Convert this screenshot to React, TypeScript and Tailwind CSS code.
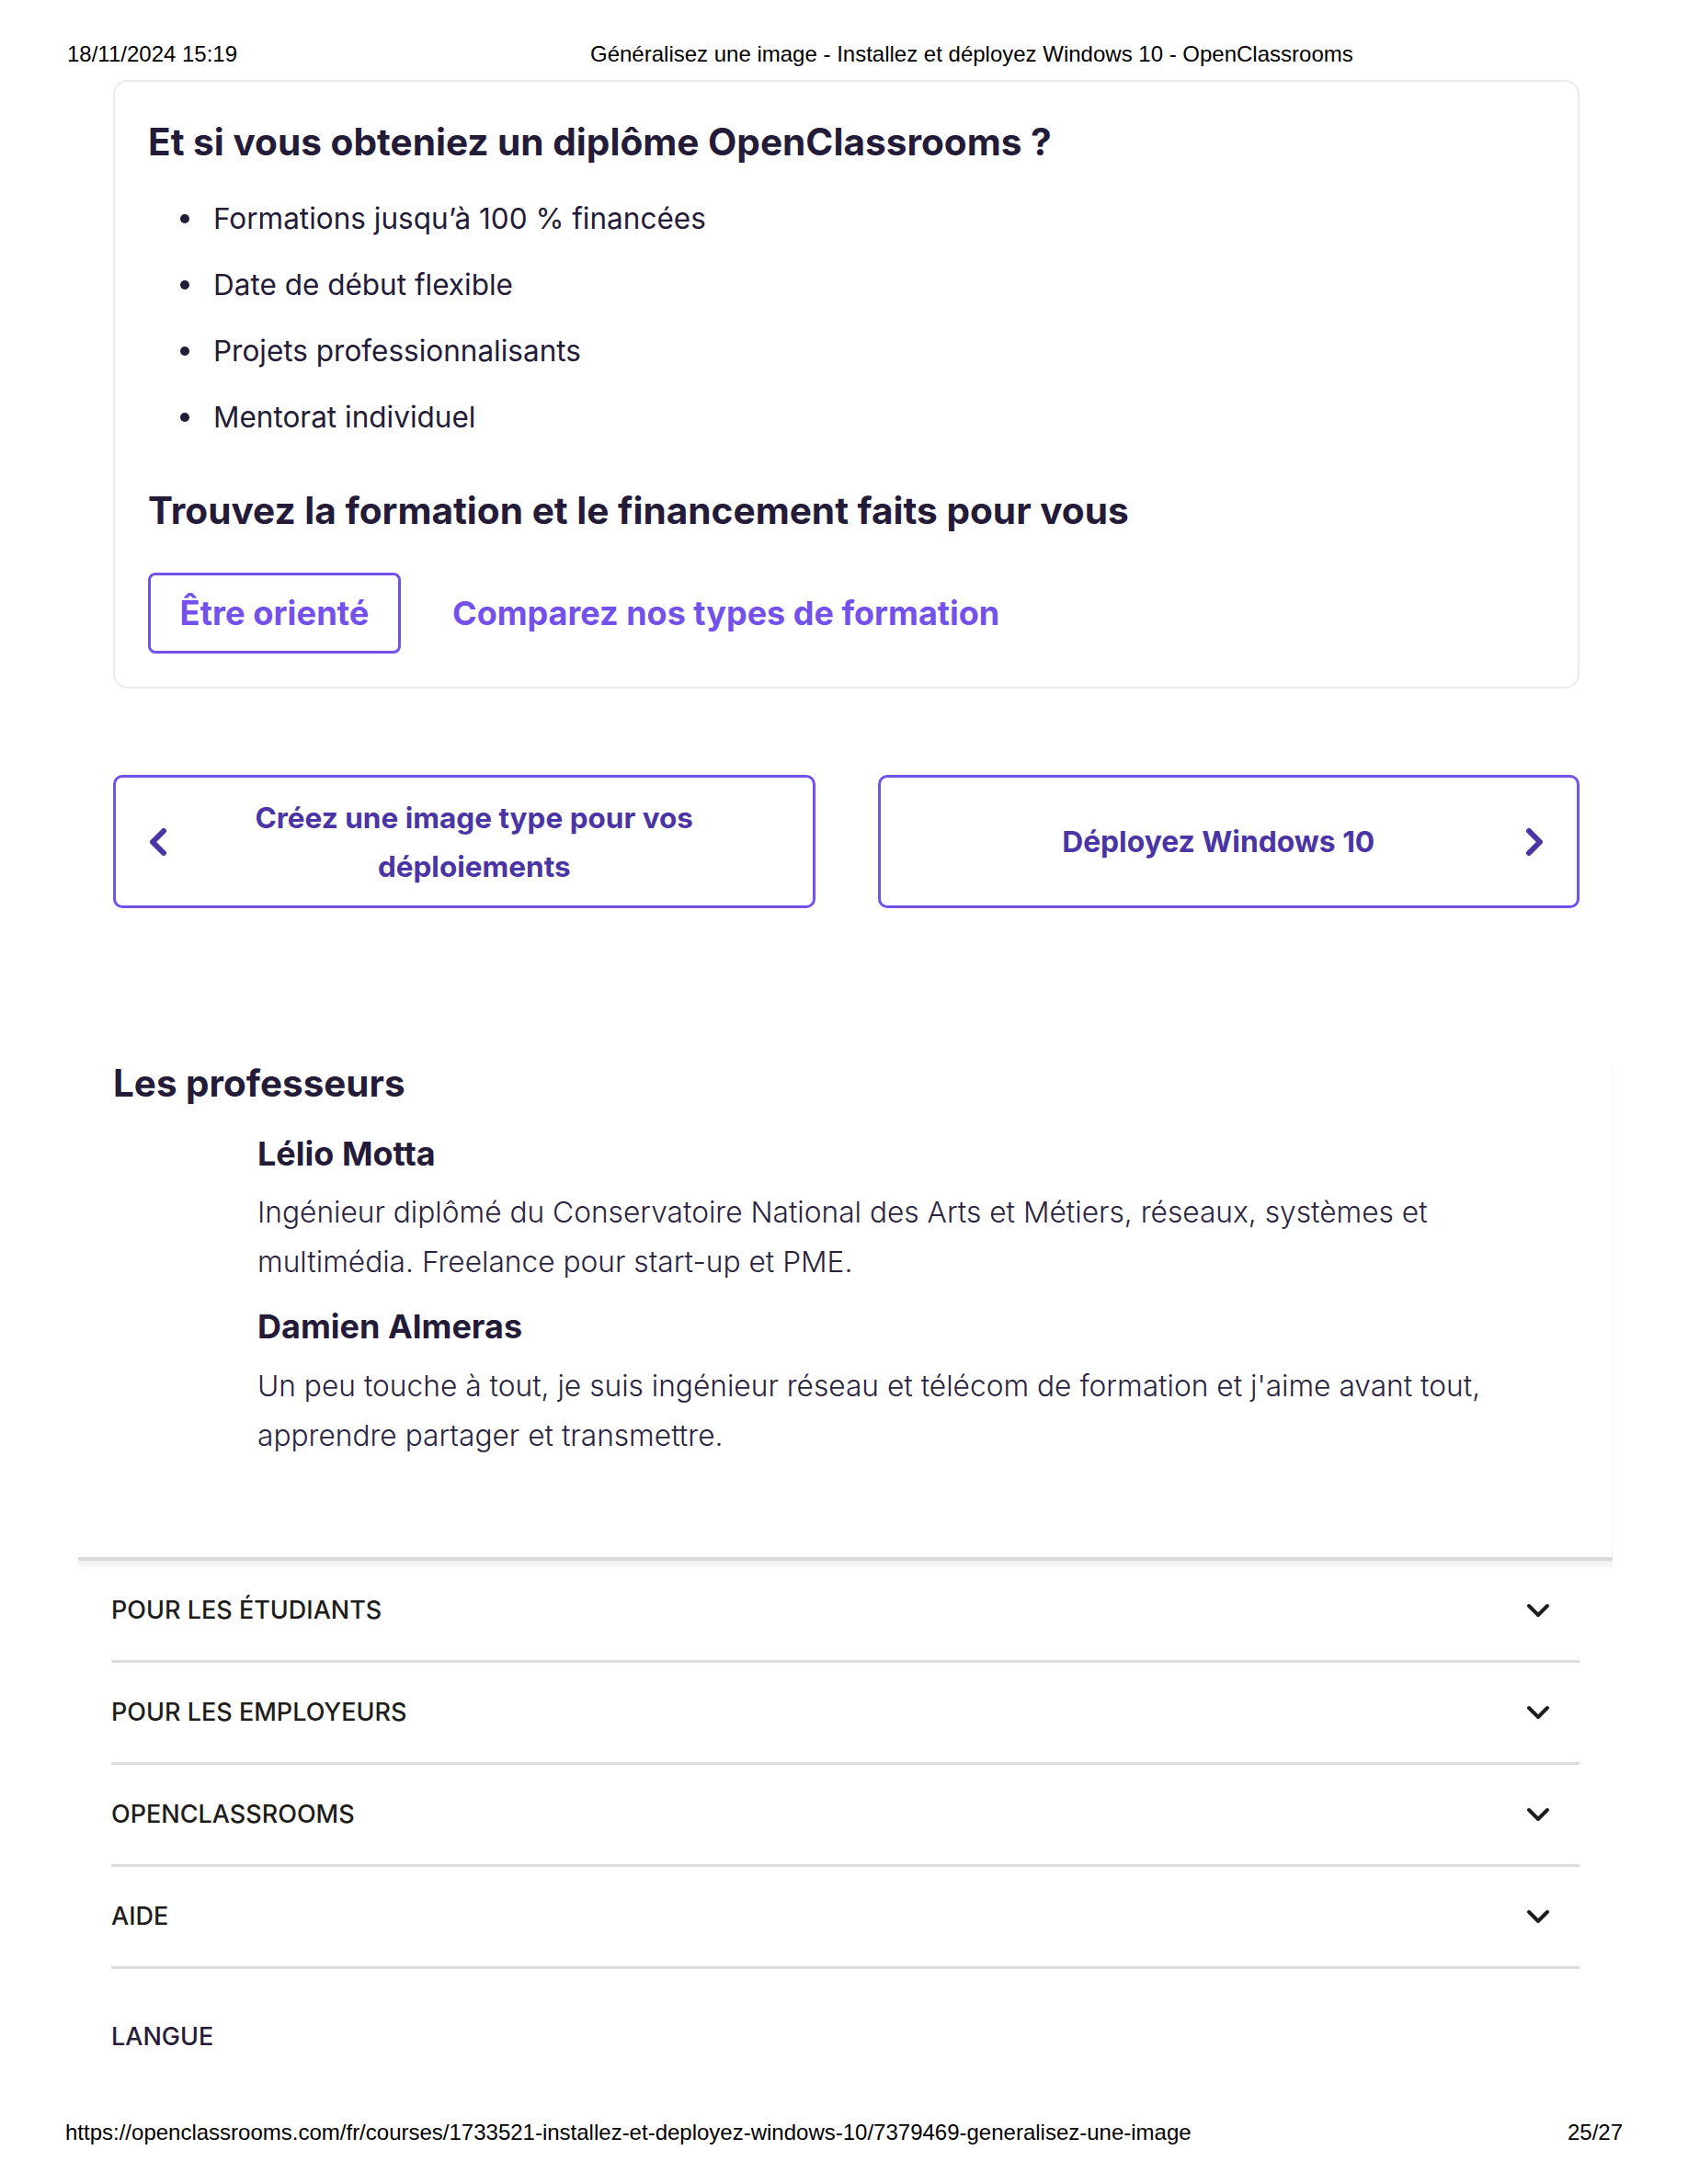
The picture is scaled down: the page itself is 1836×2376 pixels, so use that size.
import React from "react";

const bullets = [
  "Formations jusqu’à 100 % financées",
  "Date de début flexible",
  "Projets professionnalisants",
  "Mentorat individuel",
];

const footerLinks = ["POUR LES ÉTUDIANTS", "POUR LES EMPLOYEURS", "OPENCLASSROOMS", "AIDE"];

function Chevron({ dir }: { dir: "left" | "right" | "down" }) {
  if (dir === "down") {
    return (
      <svg width="26" height="16" viewBox="0 0 26 16" fill="none">
        <path d="M3 3l10 10L23 3" stroke="#1d1d1b" strokeWidth="4" strokeLinecap="round" strokeLinejoin="round" />
      </svg>
    );
  }
  return (
    <svg width="22" height="32" viewBox="0 0 22 32" fill="none">
      <path
        d={dir === "left" ? "M17 4L5 16l12 12" : "M5 4l12 12L5 28"}
        stroke="#4b35a4"
        strokeWidth="6"
        strokeLinecap="round"
        strokeLinejoin="round"
      />
    </svg>
  );
}

export default function App() {
  return (
    <div className="w-[1836px] h-[2376px] bg-white flex flex-col font-['Inter',sans-serif] text-[#231b38]">
      {/* print header */}
      <div className="flex pt-[45px] px-[73px] font-['Liberation_Sans',Arial,sans-serif] text-[24px] leading-[28px] text-black">
        <div className="w-[569px]">18/11/2024 15:19</div>
        <div>Généralisez une image - Installez et déployez Windows 10 - OpenClassrooms</div>
      </div>

      {/* diploma card */}
      <div className="ml-[123px] mt-[14px] w-[1595px] rounded-[16px] border-2 border-[#ebebeb] pt-[45px] pb-[36px] px-[36px]">
        <h3 className="text-[40.6px] leading-[42px] font-bold">Et si vous obteniez un diplôme OpenClassrooms ?</h3>
        <ul className="mt-[26px]">
          {bullets.map((b) => (
            <li key={b} className="h-[72px] flex items-center text-[31.5px]">
              <span className="ml-[35px] mr-[26px] w-[10px] h-[10px] rounded-full bg-[#231b38]" />
              {b}
            </li>
          ))}
        </ul>
        <h3 className="mt-[45px] text-[40.6px] leading-[42px] font-bold">
          Trouvez la formation et le financement faits pour vous
        </h3>
        <div className="mt-[46px] flex items-center gap-[56px]">
          <div className="w-[275px] h-[88px] rounded-[8px] border-[3px] border-[#7451eb] flex items-center justify-center text-[36.4px] font-bold text-[#7451eb]">
            Être orienté
          </div>
          <div className="text-[36px] font-bold text-[#7451eb]">Comparez nos types de formation</div>
        </div>
      </div>

      {/* chapter navigation */}
      <div className="ml-[123px] mt-[94px] w-[1595px] flex gap-[68px]">
        <div className="flex-1 h-[145px] rounded-[10px] border-[3px] border-[#7451eb] flex items-center px-[35px]">
          <Chevron dir="left" />
          <div className="flex-1 text-center text-[31.5px] leading-[53px] font-bold text-[#4b35a4]">
            Créez une image type pour vos
            <br />
            déploiements
          </div>
        </div>
        <div className="flex-1 h-[145px] rounded-[10px] border-[3px] border-[#7451eb] flex items-center px-[35px]">
          <div className="flex-1 text-center text-[31.8px] leading-[53px] font-bold text-[#4b35a4]">
            Déployez Windows 10
          </div>
          <Chevron dir="right" />
        </div>
      </div>

      {/* teachers */}
      <div className="ml-[85px] w-[1669px] mt-[169px] border-r border-[#f6f6f6]">
        <div className="pl-[38px]">
          <h2 className="text-[40.4px] leading-[44px] font-bold">Les professeurs</h2>
          <div className="pl-[157px] pt-[34px] pb-[105px]">
            <h4 className="text-[36px] leading-[40px] font-bold">Lélio Motta</h4>
            <p className="mt-[17px] text-[31.7px] leading-[54px] font-light text-[#2a2340] w-[1350px]">
              Ingénieur diplômé du Conservatoire National des Arts et Métiers, réseaux, systèmes et multimédia. Freelance
              pour start-up et PME.
            </p>
            <h4 className="mt-[23px] text-[36px] leading-[40px] font-bold">Damien Almeras</h4>
            <p className="mt-[18px] text-[31.7px] leading-[54px] font-light text-[#2a2340] w-[1350px]">
              Un peu touche à tout, je suis ingénieur réseau et télécom de formation et j&apos;aime avant tout, apprendre
              partager et transmettre.
            </p>
          </div>
        </div>
      </div>

      {/* site footer */}
      <div className="ml-[85px] w-[1669px] border-t-4 border-[#dadada]">
        <div className="h-[12px] bg-gradient-to-b from-[#f0f0f0] to-white -mb-[12px]" />
        <div className="ml-[36px] w-[1597px]">
          {footerLinks.map((l) => (
            <div
              key={l}
              className="h-[111px] flex items-center justify-between border-b-[3px] border-[#dcdcdc] pr-[32px] text-[27px] font-medium text-[#1d1d1b]"
            >
              <span>{l}</span>
              <Chevron dir="down" />
            </div>
          ))}
          <div className="mt-[56px] text-[27px] leading-[36px] font-medium text-[#271d3b]">LANGUE</div>
        </div>
      </div>

      {/* print footer */}
      <div className="mt-auto mb-[42px] flex justify-between px-[71px] font-['Liberation_Sans',Arial,sans-serif] text-[24px] leading-[28px] text-black">
        <div>https://openclassrooms.com/fr/courses/1733521-installez-et-deployez-windows-10/7379469-generalisez-une-image</div>
        <div>25/27</div>
      </div>
    </div>
  );
}
